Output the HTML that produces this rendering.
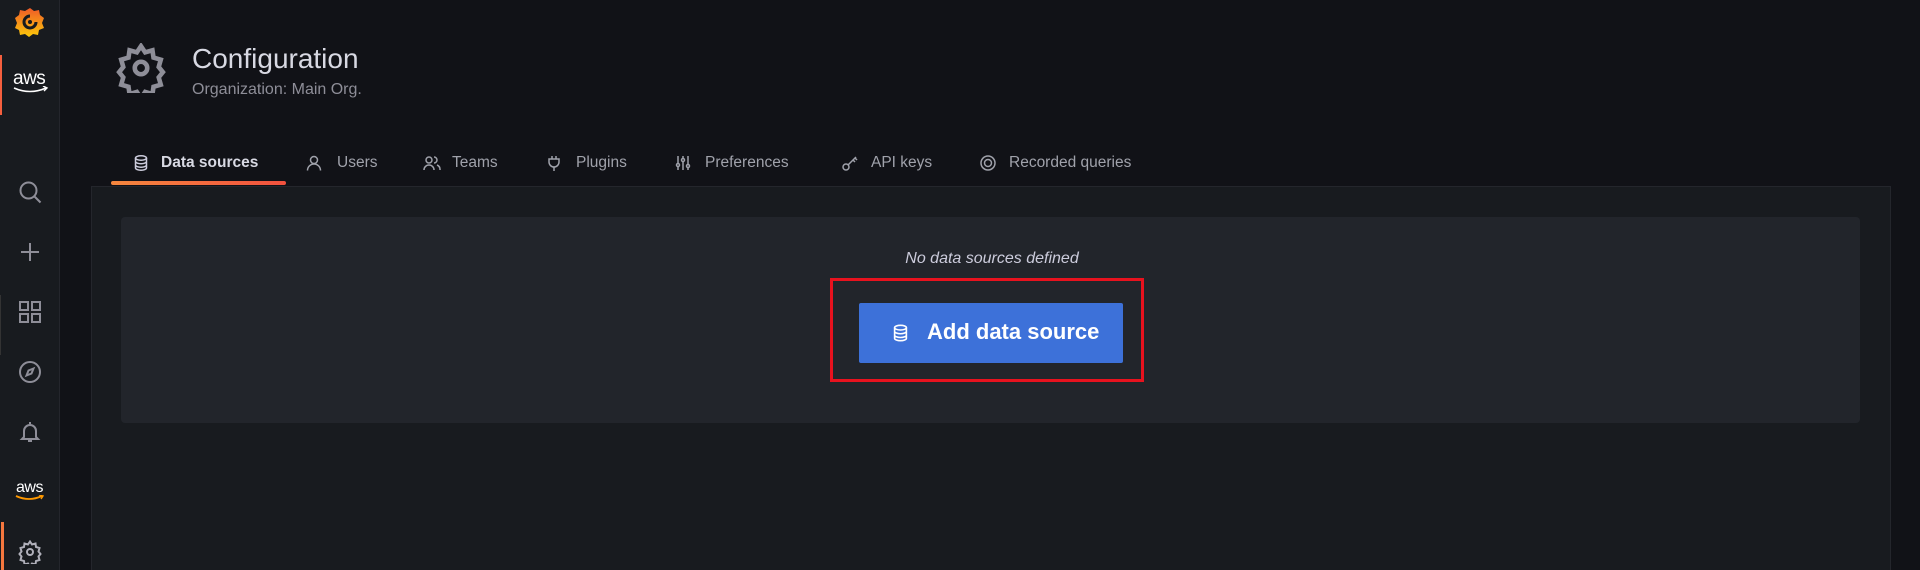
<!DOCTYPE html>
<html style="overflow:hidden;height:570px"><head><meta charset="utf-8"><style>
*{margin:0;padding:0;box-sizing:border-box}
body{width:1920px;height:570px;background:#111217;font-family:"Liberation Sans",sans-serif;position:relative;overflow:hidden;color:#ccccdc}
.sb{position:absolute;left:0;top:0;width:60px;height:570px;background:#181b1f;border-right:1px solid #24262c}
.ic{position:absolute;left:18px;width:24px;height:24px}
.abs{position:absolute}
.tab{position:absolute;top:152px;font-size:15.5px;color:#a0a2ab;white-space:nowrap;line-height:22px}
.tab svg{position:absolute;left:0;top:3px}
</style></head><body>
<div class="sb">
 <svg class="abs" style="left:13px;top:5px" width="34" height="36" viewBox="0 0 34 36">
  <defs><linearGradient id="g" x1="0" y1="1" x2="0" y2="0"><stop offset="0" stop-color="#fbca0a"/><stop offset="1" stop-color="#f05a28"/></linearGradient></defs>
  <path d="M17 3l4 3 5-1 1 5 4 3-2 5 2 5-5 2-1 5-5-1-4 3-4-3-5 1-1-5-4-2 2-5-2-5 4-3 1-5 5 1z" fill="url(#g)"/>
  <path d="M17 11a6 6 0 1 0 6 6" stroke="#181b1f" stroke-width="3" fill="none"/>
  <circle cx="17" cy="17" r="2" fill="#181b1f"/>
 </svg>
 <div class="abs" style="left:0;top:55px;width:2px;height:60px;background:#f55f3e"></div>
 <div class="abs" style="left:13px;top:68px;font-size:19px;color:#fff;letter-spacing:-0.5px">aws</div>
 <svg class="abs" style="left:13px;top:86px" width="36" height="8"><path d="M1 2q16 7 32 0" stroke="#fff" stroke-width="1.6" fill="none"/><path d="M30 0l4 2-3 3" stroke="#fff" stroke-width="1.4" fill="none"/></svg>
 <svg class="ic" style="top:180px" viewBox="0 0 24 24" fill="none" stroke="#8e8e98" stroke-width="2"><circle cx="10.5" cy="10.5" r="8"/><path d="M16.5 16.5l6 6"/></svg>
 <svg class="ic" style="top:240px" viewBox="0 0 24 24" fill="none" stroke="#8e8e98" stroke-width="2"><path d="M12 3v18M3 12h18"/></svg>
 <svg class="ic" style="top:300px" viewBox="0 0 24 24" fill="none" stroke="#8e8e98" stroke-width="2"><rect x="2" y="2" width="8" height="8"/><rect x="14" y="2" width="8" height="8"/><rect x="2" y="14" width="8" height="8"/><rect x="14" y="14" width="8" height="8"/></svg>
 <div class="abs" style="left:0;top:295px;width:1px;height:60px;background:#333"></div>
 <svg class="ic" style="top:360px" viewBox="0 0 24 24" fill="none" stroke="#8e8e98" stroke-width="2"><circle cx="12" cy="12" r="10"/><path d="M15.5 8.5l-2 5-5 2 2-5z"/></svg>
 <svg class="ic" style="top:420px" viewBox="0 0 24 24" fill="none" stroke="#8e8e98" stroke-width="2"><path d="M12 2v2M6 17v-6a6 6 0 0 1 12 0v6l2 2H4z"/><path d="M10 21h4"/></svg>
 <div class="abs" style="left:16px;top:479px;font-size:16px;color:#fff;letter-spacing:-0.5px">aws</div>
 <svg class="abs" style="left:15px;top:495px" width="30" height="8"><path d="M1 1q13 6 26 0" stroke="#f90" stroke-width="1.8" fill="none"/><path d="M24 0l4 1-2 3" stroke="#f90" stroke-width="1.4" fill="none"/></svg>
 <div class="abs" style="left:1px;top:522px;width:3px;height:48px;background:#f5773e"></div>
 <svg class="ic" style="top:540px" viewBox="0 0 24 24" fill="none" stroke="#b0b0ba" stroke-width="2"><circle cx="12" cy="12" r="3"/><path d="M12 1.5l2 3 3.5-1 .5 3.5 3.5 1-1 3.5 2 2.5-2 2.5 1 3.5-3.5 1-.5 3.5-3.5-1-2 3-2-3-3.5 1-.5-3.5-3.5-1 1-3.5-2-2.5 2-2.5-1-3.5 3.5-1 .5-3.5 3.5 1z"/></svg>
</div>

<svg class="abs" style="left:116px;top:43px" width="50" height="50" viewBox="0 0 24 24" fill="none" stroke="#8e8e98" stroke-width="2.2"><circle cx="12" cy="12" r="3"/><path d="M12 1.5l2 3 3.5-1 .5 3.5 3.5 1-1 3.5 2 2.5-2 2.5 1 3.5-3.5 1-.5 3.5-3.5-1-2 3-2-3-3.5 1-.5-3.5-3.5-1 1-3.5-2-2.5 2-2.5-1-3.5 3.5-1 .5-3.5 3.5 1z"/></svg>
<div class="abs" style="left:192px;top:43px;font-size:28px;color:#d8d9e3">Configuration</div>
<div class="abs" style="left:192px;top:81px;font-size:16px;color:#8e8e98">Organization: Main Org.</div>

<div class="tab" style="left:134px;color:#d8d9e3;font-weight:bold"><svg width="14" height="16" viewBox="0 0 14 16" fill="none" stroke="#ccccdc" stroke-width="1.5"><ellipse cx="7" cy="3" rx="5.5" ry="2.2"/><path d="M1.5 3v10c0 1.2 2.5 2.2 5.5 2.2s5.5-1 5.5-2.2V3M1.5 6.5c0 1.2 2.5 2.2 5.5 2.2s5.5-1 5.5-2.2M1.5 10c0 1.2 2.5 2.2 5.5 2.2s5.5-1 5.5-2.2"/></svg><span style="margin-left:27px">Data sources</span></div>
<div class="abs" style="left:111px;top:181px;width:175px;height:4px;border-radius:2px;background:linear-gradient(90deg,#f5873e,#f2513e)"></div>
<div class="tab" style="left:306px"><svg width="16" height="16" viewBox="0 0 16 16" fill="none" stroke="#a0a2ab" stroke-width="1.5"><circle cx="8" cy="5" r="3.5"/><path d="M1.5 15.5a6.5 6.5 0 0 1 13 0"/></svg><span style="margin-left:31px">Users</span></div>
<div class="tab" style="left:423px"><svg width="18" height="16" viewBox="0 0 18 16" fill="none" stroke="#a0a2ab" stroke-width="1.5"><circle cx="6" cy="5" r="3"/><path d="M1 15a5 5 0 0 1 10 0M11 2a3 3 0 0 1 0 6M14 10a5 5 0 0 1 3 5"/></svg><span style="margin-left:29px">Teams</span></div>
<div class="tab" style="left:547px"><svg width="14" height="16" viewBox="0 0 14 16" fill="none" stroke="#a0a2ab" stroke-width="1.5"><path d="M5 1v3M9 1v3M2 4h10v3a5 5 0 0 1-10 0zM7 12v4"/></svg><span style="margin-left:29px">Plugins</span></div>
<div class="tab" style="left:675px"><svg width="16" height="16" viewBox="0 0 16 16" fill="none" stroke="#a0a2ab" stroke-width="1.5"><path d="M3 1v14M8 1v14M13 1v14"/><circle cx="3" cy="10" r="1.5" fill="#111217"/><circle cx="8" cy="5" r="1.5" fill="#111217"/><circle cx="13" cy="11" r="1.5" fill="#111217"/></svg><span style="margin-left:30px">Preferences</span></div>
<div class="tab" style="left:842px"><svg width="16" height="16" viewBox="0 0 16 16" fill="none" stroke="#a0a2ab" stroke-width="1.5"><circle cx="4" cy="12" r="3"/><path d="M6 10l8-8M11 5l2 2M13 3l2 2"/></svg><span style="margin-left:29px">API keys</span></div>
<div class="tab" style="left:980px"><svg width="16" height="16" viewBox="0 0 16 16" fill="none" stroke="#a0a2ab" stroke-width="1.5"><circle cx="8" cy="8" r="7"/><circle cx="8" cy="8" r="3.5"/></svg><span style="margin-left:29px">Recorded queries</span></div>

<div class="abs" style="left:91px;top:186px;width:1800px;height:384px;background:#181b1f;border:1px solid #24262c;border-bottom:none"></div>
<div class="abs" style="left:121px;top:217px;width:1739px;height:206px;background:#22252b;border-radius:4px"></div>
<div class="abs" style="left:896px;top:250px;width:192px;text-align:center;font-size:16px;font-style:italic;color:#ccccdc">No data sources defined</div>
<div class="abs" style="left:830px;top:278px;width:314px;height:104px;border:3px solid #e8121e"></div>
<div class="abs" style="left:859px;top:303px;width:264px;height:60px;background:#3d71d9;border-radius:2px"></div>
<svg class="abs" style="left:893px;top:324px" width="15" height="18" viewBox="0 0 14 16" fill="none" stroke="#fff" stroke-width="1.5"><ellipse cx="7" cy="3" rx="5.5" ry="2.2"/><path d="M1.5 3v10c0 1.2 2.5 2.2 5.5 2.2s5.5-1 5.5-2.2V3M1.5 6.5c0 1.2 2.5 2.2 5.5 2.2s5.5-1 5.5-2.2M1.5 10c0 1.2 2.5 2.2 5.5 2.2s5.5-1 5.5-2.2"/></svg>
<div class="abs" style="left:927px;top:319px;font-size:22px;font-weight:bold;color:#fff">Add data source</div>
</body></html>
